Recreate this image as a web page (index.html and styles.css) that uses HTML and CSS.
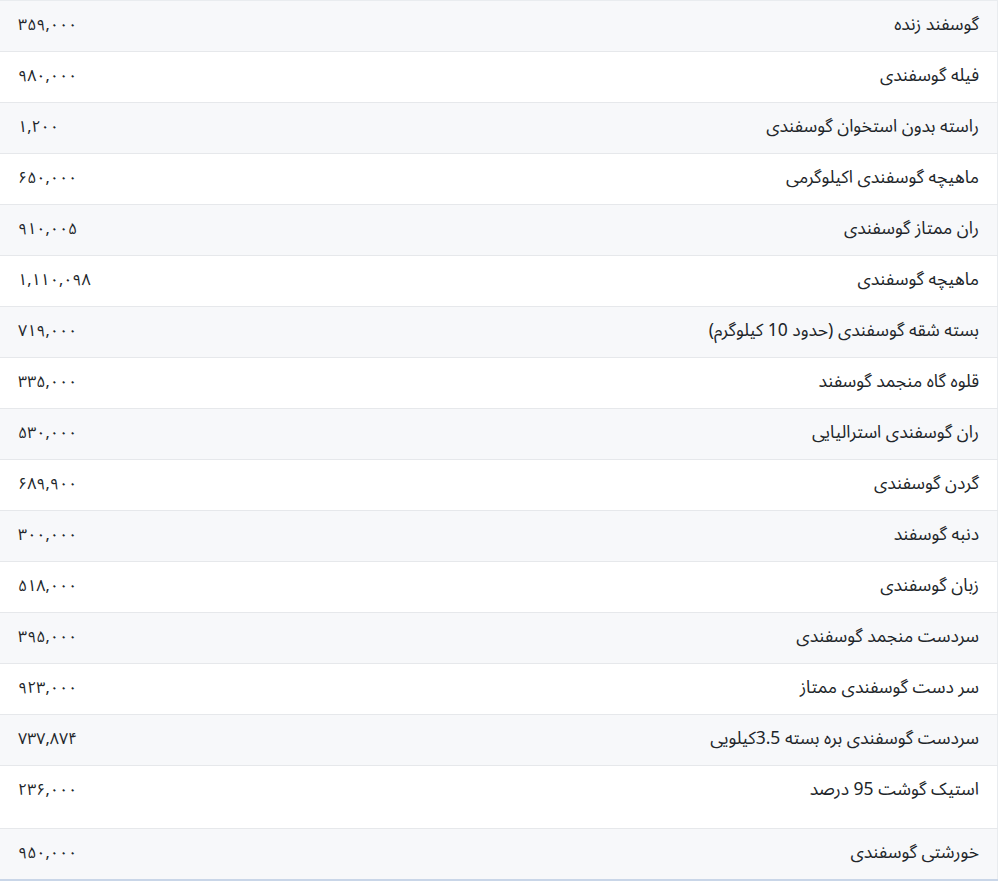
FILE: index.html
```html
<!DOCTYPE html>
<html lang="fa" dir="rtl">
<head>
<meta charset="utf-8">
<title>قیمت گوشت گوسفندی</title>
<link rel="stylesheet" href="styles.css">
</head>
<body>
<table class="price-table">
<tbody>
<tr><td class="name">گوسفند زنده</td><td class="price">۳۵۹,۰۰۰</td></tr>
<tr><td class="name">فیله گوسفندی</td><td class="price">۹۸۰,۰۰۰</td></tr>
<tr><td class="name">راسته بدون استخوان گوسفندی</td><td class="price">۱,۲۰۰</td></tr>
<tr><td class="name">ماهیچه گوسفندی اکیلوگرمی</td><td class="price">۶۵۰,۰۰۰</td></tr>
<tr><td class="name">ران ممتاز گوسفندی</td><td class="price">۹۱۰,۰۰۵</td></tr>
<tr><td class="name">ماهیچه گوسفندی</td><td class="price">۱,۱۱۰,۰۹۸</td></tr>
<tr><td class="name">بسته شقه گوسفندی (حدود 10 کیلوگرم)</td><td class="price">۷۱۹,۰۰۰</td></tr>
<tr><td class="name">قلوه گاه منجمد گوسفند</td><td class="price">۳۳۵,۰۰۰</td></tr>
<tr><td class="name">ران گوسفندی استرالیایی</td><td class="price">۵۳۰,۰۰۰</td></tr>
<tr><td class="name">گردن گوسفندی</td><td class="price">۶۸۹,۹۰۰</td></tr>
<tr><td class="name">دنبه گوسفند</td><td class="price">۳۰۰,۰۰۰</td></tr>
<tr><td class="name">زبان گوسفندی</td><td class="price">۵۱۸,۰۰۰</td></tr>
<tr><td class="name">سردست منجمد گوسفندی</td><td class="price">۳۹۵,۰۰۰</td></tr>
<tr><td class="name">سر دست گوسفندی ممتاز</td><td class="price">۹۲۳,۰۰۰</td></tr>
<tr><td class="name">سردست گوسفندی بره بسته 3.5کیلویی</td><td class="price">۷۳۷,۸۷۴</td></tr>
<tr class="tall"><td class="name">استیک گوشت 95 درصد</td><td class="price">۲۳۶,۰۰۰</td></tr>
<tr><td class="name">خورشتی گوسفندی</td><td class="price">۹۵۰,۰۰۰</td></tr>
</tbody>
</table>
</body>
</html>
```

FILE: styles.css
```css
html, body {
  margin: 0;
  padding: 0;
  background: #ffffff;
}
body {
  font-family: "Noto Sans Arabic", "Vazirmatn", "DejaVu Sans", "Noto Sans", sans-serif;
  font-size: 17.5px;
  color: #212529;
}
.price-table {
  width: 998px;
  border-collapse: collapse;
  border-top: 1px solid #e9ecef;
  border-right: 1px solid #e9ecef;
  border-bottom: 2px solid #c9d6e8;
}
.price-table td {
  height: 51px;
  padding: 11px 18px 0 18px;
  vertical-align: top;
  line-height: 26px;
  border-bottom: 1px solid #e6e8eb;
  box-sizing: border-box;
}
.price-table tr:nth-child(odd) td {
  background: #f7f8fa;
}
.price-table .name {
  text-align: right;
}
.price-table .price {
  text-align: left;
  width: 200px;
  font-size: 16px;
}
.price-table tr.tall td {
  height: 63px;
}
```
